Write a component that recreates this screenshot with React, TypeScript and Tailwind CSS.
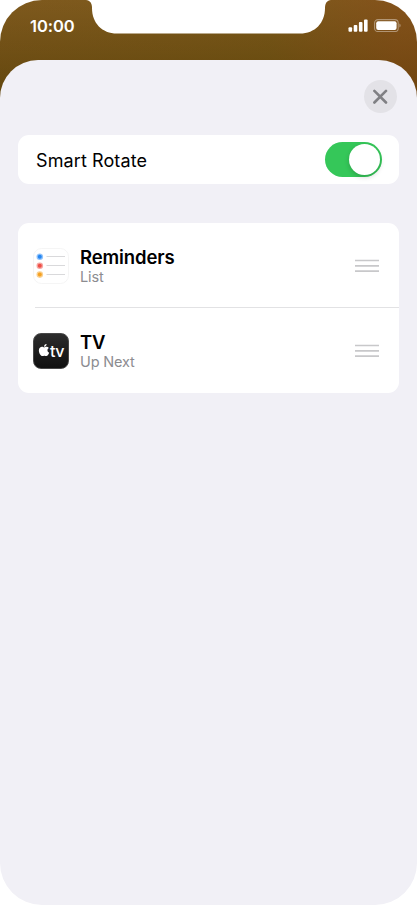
import { useState } from "react";
import { FaApple } from "react-icons/fa";

const widgets = [
  { id: "reminders", name: "Reminders", detail: "List" },
  { id: "tv", name: "TV", detail: "Up Next" },
];

function StatusBar() {
  return (
    <div className="relative h-[60px] text-white">
      <svg
        className="absolute left-0 top-0"
        width="417"
        height="34"
        viewBox="0 0 417 34"
        fill="#fff"
      >
        <path d="M86 0 C90 0.5 92 3 92 8 C92 23 102 33.5 117 33.5 H300 C315 33.5 325 23 325 8 C325 3 327 0.5 331 0 Z" />
      </svg>

      <div className="flex items-start justify-between pl-[30px] pr-[16px]">
        <span className="mt-[16px] text-[16.5px] font-semibold leading-5 tracking-[-0.05px]">
          10:00
        </span>

        <div className="mt-[19px] flex gap-[6px]">
          <svg width="20" height="13" viewBox="0 0 20 13" fill="currentColor">
            <rect x="0.5" y="8.2" width="3.6" height="4.6" rx="1" />
            <rect x="5.7" y="6" width="3.6" height="6.8" rx="1" />
            <rect x="10.9" y="3.1" width="3.6" height="9.7" rx="1" />
            <rect x="16" y="0.4" width="3.6" height="12.4" rx="1" />
          </svg>
          <svg width="27" height="13" viewBox="0 0 27 13">
            <rect
              x="0.6"
              y="0.6"
              width="23.6"
              height="12"
              rx="3.4"
              fill="none"
              stroke="#fff"
              strokeOpacity="0.4"
              strokeWidth="1.1"
            />
            <rect x="2.2" y="2.2" width="20.4" height="8.8" rx="2" fill="#fff" />
            <path d="M25.4 4.6 C27 5.2 27 8 25.4 8.6 Z" fill="#fff" fillOpacity="0.4" />
          </svg>
        </div>
      </div>
    </div>
  );
}

function RemindersIcon() {
  return (
    <svg width="36" height="36" viewBox="0 0 36 36">
      <rect x="0.5" y="0.5" width="35" height="35" rx="8" fill="#fff" stroke="#f5f5f5" />
      {[
        { y: 8.8, color: "#2386f3" },
        { y: 17.7, color: "#ee4e46" },
        { y: 26.6, color: "#f5a122" },
      ].map((dot) => (
        <g key={dot.y}>
          <circle cx="6.8" cy={dot.y} r="3.3" fill={dot.color} fillOpacity="0.5" />
          <circle cx="6.8" cy={dot.y} r="2" fill={dot.color} />
          <path d={`M13.5 ${Math.floor(dot.y) + 0.5} H32`} stroke="#d9d9db" strokeWidth="1" />
        </g>
      ))}
    </svg>
  );
}

function TvIcon() {
  return (
    <div className="flex size-9 items-center justify-center rounded-[8px] border border-[#484848] bg-linear-to-b from-[#2d2d2d] to-[#101010] text-white">
      <FaApple className="mb-[3px] h-[14px] w-[12px] shrink-0" />
      <span className="text-[16px] font-medium leading-4 tracking-[-0.4px]">tv</span>
    </div>
  );
}

function DragHandle() {
  return (
    <svg width="24" height="14" viewBox="0 0 24 14" stroke="#c8c8ca" strokeWidth="1.6">
      <path d="M0 1.5 H24 M0 6.9 H24 M0 12.1 H24" />
    </svg>
  );
}

export default function App() {
  const [smartRotate, setSmartRotate] = useState(true);

  return (
    <div className="h-[905px] w-[417px] bg-white font-['Inter',sans-serif]">
      <div className="flex h-full flex-col overflow-hidden rounded-[42px] bg-[linear-gradient(90deg,rgba(112,82,20,0.2)_0%,rgba(102,82,10,0.2)_65%,rgba(135,70,20,0.4)_95%),linear-gradient(180deg,#825b20_0px,#6c4c13_62px,#5d430b_100px)] bg-[length:100%_130px] bg-no-repeat">
        <StatusBar />

        <main className="flex-1 rounded-t-[38px] bg-[#f1f0f6] px-[18px] pt-5">
          <div className="flex justify-end pr-[2px]">
            <button
              className="flex size-[33px] items-center justify-center rounded-full bg-[#e3e2e7]"
              aria-label="Close"
            >
              <svg width="15" height="15" viewBox="0 0 15 15" stroke="#808084" strokeWidth="2.6" strokeLinecap="round">
                <path d="M1.4 1.9 L13 13.5 M13 1.9 L1.4 13.5" />
              </svg>
            </button>
          </div>

          <section className="mt-[22px] flex h-[49px] items-center justify-between rounded-[11px] bg-white pl-[18px] pr-[17.5px]">
            <span className="pt-px text-[18px] tracking-[0.1px] text-black">Smart Rotate</span>
            <button
              role="switch"
              aria-checked={smartRotate}
              aria-label="Smart Rotate"
              onClick={() => setSmartRotate(!smartRotate)}
              className={`flex h-[35px] w-[57px] items-center rounded-full p-[2px] ${
                smartRotate ? "justify-end bg-[#35c759]" : "justify-start bg-[#e9e9ea]"
              }`}
            >
              <span className="size-[31px] rounded-full bg-white shadow-[0_2px_5px_rgba(0,0,0,0.18)]" />
            </button>
          </section>

          <section className="mt-[39px] h-[170px] rounded-[11px] bg-white">
            {widgets.map((widget, index) => (
              <div key={widget.id}>
                {index > 0 && <div className="ml-[17px] h-px bg-[#e2e2e4]" />}
                <div className="flex h-[84px] items-center pl-[15px] pr-5 pt-[2px]">
                  {widget.id === "tv" ? <TvIcon /> : <RemindersIcon />}
                  <div className="ml-[11px] flex-1 pb-px">
                    <h2 className="text-[18.5px] font-semibold leading-[22px] tracking-[-0.12px] text-black">
                      {widget.name}
                    </h2>
                    <p className="text-[14.5px] leading-[18px] tracking-[-0.15px] text-[#8c8c90]">
                      {widget.detail}
                    </p>
                  </div>
                  <DragHandle />
                </div>
              </div>
            ))}
          </section>
        </main>
      </div>
    </div>
  );
}
